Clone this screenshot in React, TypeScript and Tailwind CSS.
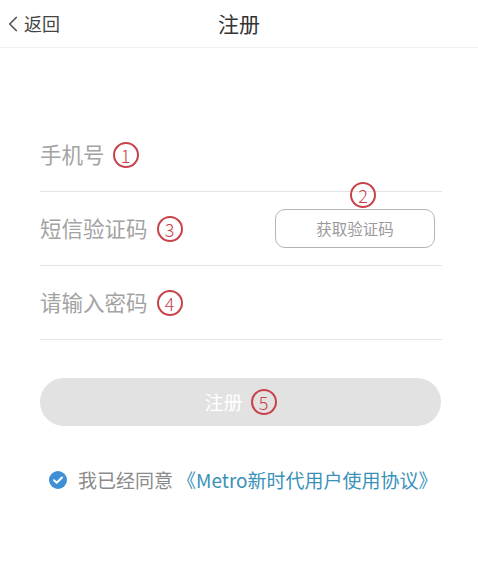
import { ChevronLeft } from "lucide-react";

const font = { fontFamily: '"Noto Sans CJK SC", "Noto Sans", sans-serif' };

function Mark({ n }: { n: string }) {
  return (
    <span className="inline-flex h-[26px] w-[26px] items-center justify-center rounded-full border-2 border-[#c8424a] text-[18px] font-light leading-none text-[#c8424a]">
      {n}
    </span>
  );
}

export default function App() {
  return (
    <div className="min-h-[576px] w-full bg-white" style={font}>
      <div className="relative flex h-[48px] items-center border-b border-[#f0f0f0]">
        <div className="flex items-center text-[18px] text-[#444]">
          <ChevronLeft size={26} strokeWidth={1.6} className="-mr-[2px] text-[#555]" />
          <span>返回</span>
        </div>
        <div className="absolute left-1/2 -translate-x-1/2 text-[21px] text-[#333]">注册</div>
      </div>

      <div className="ml-[40px] mr-[36px] mt-[70px]">
        <div className="relative flex h-[74px] items-center gap-[8px] border-b border-[#e4e4e4] text-[21.5px] text-[#a3a3a3]">
          <span>手机号</span>
          <Mark n="1" />
          <div className="absolute left-[310px] top-[60px]">
            <Mark n="2" />
          </div>
        </div>
        <div className="flex h-[74px] items-center border-b border-[#e4e4e4] text-[21.5px] text-[#a3a3a3]">
          <span>短信验证码</span>
          <span className="ml-[9px]">
            <Mark n="3" />
          </span>
          <button className="ml-auto mr-[7px] h-[39px] w-[160px] rounded-[10px] border border-[#b5b5b5] text-[15.5px] text-[#9a9a9a]">
            获取验证码
          </button>
        </div>
        <div className="flex h-[74px] items-center gap-[9px] border-b border-[#e4e4e4] text-[21.5px] text-[#a3a3a3]">
          <span>请输入密码</span>
          <Mark n="4" />
        </div>

        <button className="mt-[38px] flex h-[48px] w-[401px] items-center justify-center gap-[8px] rounded-full bg-[#e2e2e2] text-[19px] text-white">
          <span>注册</span>
          <Mark n="5" />
        </button>

        <div className="mt-[40px] flex items-center pl-[9px] text-[19px]">
          <svg width="18" height="18" viewBox="0 0 18 18">
            <circle cx="9" cy="9" r="9" fill="#3f8fd6" />
            <path d="M5 9.2l2.7 2.6L13 6.5" fill="none" stroke="white" strokeWidth="2" strokeLinecap="round" strokeLinejoin="round" />
          </svg>
          <span className="ml-[11px] text-[#8a8a8a]">我已经同意</span>
          <span className="ml-[4px] text-[#3a92b8]">《Metro新时代用户使用协议》</span>
        </div>
      </div>
    </div>
  );
}
